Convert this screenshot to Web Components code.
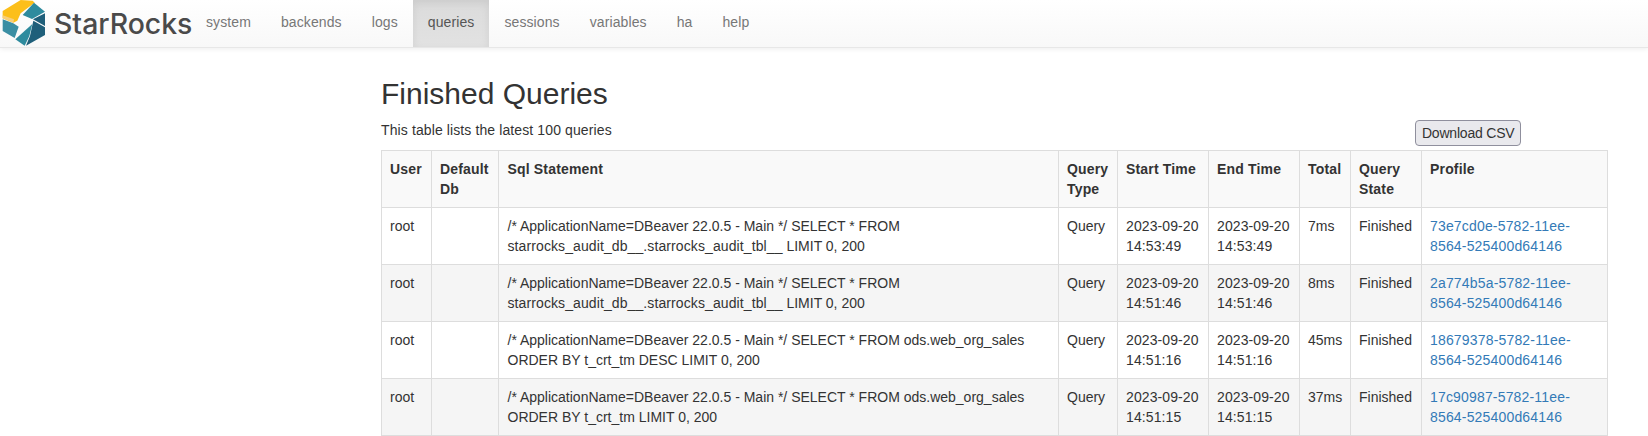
<!DOCTYPE html>
<html>
<head>
<meta charset="utf-8">
<title>Finished Queries</title>
<style>
  html, body { margin: 0; height: 100%; overflow: hidden; background: #fff; }
  body { font: 14px/20px "Liberation Sans", Arial, sans-serif; color: #333; }
</style>
</head>
<body>
<sr-navbar>
  <sr-nav-link>system</sr-nav-link>
  <sr-nav-link>backends</sr-nav-link>
  <sr-nav-link>logs</sr-nav-link>
  <sr-nav-link active>queries</sr-nav-link>
  <sr-nav-link>sessions</sr-nav-link>
  <sr-nav-link>variables</sr-nav-link>
  <sr-nav-link>ha</sr-nav-link>
  <sr-nav-link>help</sr-nav-link>
</sr-navbar>
<sr-page>
  <span slot="title">Finished Queries</span>
  <span slot="intro">This table lists the latest 100 queries</span>
  <sr-query-table></sr-query-table>
</sr-page>

<script>
// Top bar with the logo and the menu links
class SrNavbar extends HTMLElement {
  constructor() {
    super();
    this.attachShadow({ mode: 'open' });
    this.shadowRoot.innerHTML = `
      <style>
        :host {
          display: flex;
          height: 47px;
          background: linear-gradient(to bottom, #fff 0, #f8f8f8 100%);
          border-bottom: 1px solid #e7e7e7;
          box-shadow: 0 1px 5px rgba(0,0,0,.075);
        }
        .brand { display: flex; align-items: center; width: 191px; flex: none; }
        svg { width: 50px; height: 50px; flex: none; margin-right: 4px; align-self: flex-start; }
        .name { font: 500 28.4px/47px Inter, "Noto Sans", sans-serif; color: #4a4a4a; }
        nav { display: flex; }
      </style>
      <div class="brand">
        <svg viewBox="0 0 150 150" aria-hidden="true">
          <polygon fill="#fcbf1a" points="8,33 62,0 98,2 104,8 62,40 52,62 40,68 8,55"/>
          <polygon fill="#f7cf7a" points="8,46 42,58 40,68 8,55"/>
          <polygon fill="#3a8ea3" points="8,58 40,70 56,80 44,114 8,93"/>
          <polygon fill="#2e8b9e" points="102,8 135,35 96,57 68,45"/>
          <polygon fill="#1f5f7a" points="135,40 135,78 99,58"/>
          <polygon fill="#1f5f7a" points="100,62 135,82 135,105 78,137 90,108"/>
          <polygon fill="#2e8b9e" points="46,118 97,72 88,108 74,137"/>
        </svg>
        <span class="name">StarRocks</span>
      </div>
      <nav><slot></slot></nav>
    `;
  }
}

// One menu entry, the "active" attribute marks the current page
class SrNavLink extends HTMLElement {
  constructor() {
    super();
    this.attachShadow({ mode: 'open' });
    this.shadowRoot.innerHTML = `
      <style>
        :host { display: block; padding: 12px 15px 15px; color: #777; letter-spacing: .1px; }
        :host([active]) {
          color: #555;
          background: linear-gradient(to bottom, #dbdbdb 0, #e2e2e2 100%);
          box-shadow: inset 0 3px 9px rgba(0,0,0,.075);
        }
      </style>
      <slot></slot>
    `;
  }
}

// Page body: title, intro line with the csv button, then the content
class SrPage extends HTMLElement {
  constructor() {
    super();
    this.attachShadow({ mode: 'open' });
    this.shadowRoot.innerHTML = `
      <style>
        :host { display: block; padding: 29px 40px 0 381px; }
        h2 { font: 500 30px/33px "Liberation Sans", Arial, sans-serif; margin: 0 0 10px; color: #333; }
        .intro { display: flex; justify-content: space-between; align-items: flex-start; height: 30px; letter-spacing: .11px; }
        button {
          font: 14px/20px "Liberation Sans", Arial, sans-serif;
          letter-spacing: -.2px;
          height: 26px;
          margin-right: 87px;
          padding: 2px 5.5px;
          color: #333;
          background: #e9e9ed;
          border: 1px solid #8f8f9d;
          border-radius: 4px;
        }
      </style>
      <h2><slot name="title"></slot></h2>
      <div class="intro">
        <span><slot name="intro"></slot></span>
        <button type="button">Download CSV</button>
      </div>
      <slot></slot>
    `;
  }
}

const COLUMNS = [
  ['User', 50], ['Default Db', 67], ['Sql Statement', 560], ['Query Type', 59],
  ['Start Time', 91], ['End Time', 91], ['Total', 51], ['Query State', 71], ['Profile', 186]
];

const QUERIES = [
  { sql: '/* ApplicationName=DBeaver 22.0.5 - Main */ SELECT * FROM <span class="wide">starrocks_audit_db__.starrocks_audit_tbl__</span> LIMIT 0, 200',
    time: '14:53:49', total: '7ms', profile: '73e7cd0e-5782-11ee-8564-525400d64146' },
  { sql: '/* ApplicationName=DBeaver 22.0.5 - Main */ SELECT * FROM <span class="wide">starrocks_audit_db__.starrocks_audit_tbl__</span> LIMIT 0, 200',
    time: '14:51:46', total: '8ms', profile: '2a774b5a-5782-11ee-8564-525400d64146' },
  { sql: '/* ApplicationName=DBeaver 22.0.5 - Main */ SELECT * FROM ods.web_org_sales ORDER BY t_crt_tm DESC LIMIT 0, 200',
    time: '14:51:16', total: '45ms', profile: '18679378-5782-11ee-8564-525400d64146' },
  { sql: '/* ApplicationName=DBeaver 22.0.5 - Main */ SELECT * FROM ods.web_org_sales ORDER BY t_crt_tm LIMIT 0, 200',
    time: '14:51:15', total: '37ms', profile: '17c90987-5782-11ee-8564-525400d64146' }
];

// Table of the finished queries
class SrQueryTable extends HTMLElement {
  constructor() {
    super();
    this.attachShadow({ mode: 'open' });
    this.render();
  }

  render() {
    const styles = `
      :host { display: block; }
      table { border-collapse: collapse; table-layout: fixed; width: 1227px; }
      th, td { padding: 8px; border: 1px solid #ddd; text-align: left; vertical-align: top; line-height: 20px; }
      th { background: #f9f9f9; font-weight: bold; letter-spacing: .17px; }
      tbody tr:nth-child(even) td { background: #f5f5f5; }
      th:nth-child(3), td:nth-child(3) { padding-left: 8.5px; }
      .date { letter-spacing: .1px; }
      .wide { letter-spacing: .1px; }
      a { color: #337ab7; text-decoration: none; letter-spacing: .17px; }
    `;
    const cols = COLUMNS.map(c => `<col style="width:${c[1]}px">`).join('');
    const head = COLUMNS.map(c => `<th>${c[0]}</th>`).join('');
    const rows = QUERIES.map(q => `
      <tr>
        <td>root</td>
        <td></td>
        <td>${q.sql}</td>
        <td>Query</td>
        <td class="date">2023-09-20 ${q.time}</td>
        <td class="date">2023-09-20 ${q.time}</td>
        <td>${q.total}</td>
        <td>Finished</td>
        <td><a href="#">${q.profile}</a></td>
      </tr>`).join('');
    this.shadowRoot.innerHTML = `
      <style>${styles}</style>
      <table>
        <colgroup>${cols}</colgroup>
        <thead><tr>${head}</tr></thead>
        <tbody>${rows}</tbody>
      </table>
    `;
  }
}

customElements.define('sr-navbar', SrNavbar);
customElements.define('sr-nav-link', SrNavLink);
customElements.define('sr-page', SrPage);
customElements.define('sr-query-table', SrQueryTable);
</script>
</body>
</html>
